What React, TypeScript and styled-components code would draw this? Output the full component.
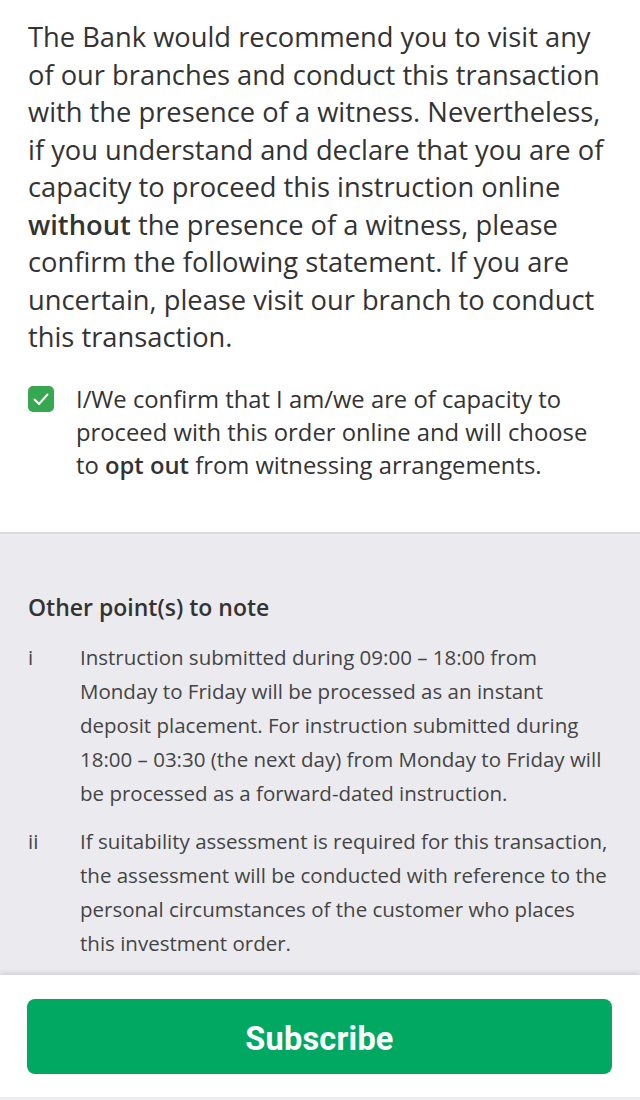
import React from "react";
import styled, { createGlobalStyle } from "styled-components";

const Global = createGlobalStyle`
  html, body { margin: 0; padding: 0; background: #ffffff; }
  body { font-family: "Open Sans", "Noto Sans", sans-serif; color: #333333; }
  * { box-sizing: border-box; }
`;

const Page = styled.div`
  height: 1100px;
  display: flex;
  flex-direction: column;
  overflow: hidden;
`;

const Main = styled.main`
  flex: 1;
  min-height: 0;
  overflow: hidden;
  display: flex;
  flex-direction: column;
`;

const Intro = styled.section`
  padding: 18px 30px 50px 28px;
  background: #ffffff;
`;

const Lead = styled.p`
  margin: 0;
  font-size: 27.3px;
  line-height: 37.5px;
  color: #333333;
`;

const Strong = styled.b`
  font-weight: 600;
`;

const ConfirmRow = styled.label`
  margin-top: 27px;
  display: flex;
  align-items: flex-start;
  gap: 22px;
`;

const CheckBox = styled.span`
  flex: none;
  width: 26px;
  height: 26px;
  margin-top: 3px;
  border-radius: 5px;
  background: #36a852;
  display: flex;
  align-items: center;
  justify-content: center;
`;

const ConfirmText = styled.span`
  font-size: 23.8px;
  line-height: 33px;
  color: #333333;
`;

const Notes = styled.section`
  flex: 1;
  background: #ebebef;
  border-top: 2px solid #dcdce0;
  padding: 58px 26px 0 28px;
`;

const NotesTitle = styled.h2`
  margin: 0 0 18px 0;
  font-size: 23px;
  line-height: 30px;
  font-weight: 600;
  color: #333333;
`;

const List = styled.ol`
  list-style: none;
  margin: 0;
  padding: 0;
  display: flex;
  flex-direction: column;
  gap: 14px;
`;

const Item = styled.li`
  display: flex;
  align-items: flex-start;
`;

const Marker = styled.span`
  flex: none;
  width: 52px;
  font-size: 20.5px;
  line-height: 34px;
  color: #444444;
`;

const ItemText = styled.span`
  font-size: 20.5px;
  line-height: 34px;
  color: #444444;
`;

const Footer = styled.footer`
  flex: none;
  position: relative;
  background: #ffffff;
  box-shadow: 0 -2px 5px rgba(0, 0, 0, 0.12);
  padding: 24px 28px 23px 27px;
  border-bottom: 3px solid #ececef;
`;

const Button = styled.button`
  width: 100%;
  height: 75px;
  border: none;
  border-radius: 8px;
  background: #00a862;
  color: #ffffff;
  font-family: Roboto, "Liberation Sans", sans-serif;
  font-weight: 700;
  font-size: 32.5px;
  letter-spacing: 0.2px;
  display: flex;
  align-items: center;
  justify-content: center;
  padding-top: 5px;
  cursor: pointer;
`;

export default function App() {
  return (
    <Page>
      <Global />
      <Main>
        <Intro>
          <Lead>
            The Bank would recommend you to visit any of our branches and
            conduct this transaction with the presence of a witness.
            Nevertheless, if you understand and declare that you are of
            capacity to proceed this instruction online{" "}
            <Strong>without</Strong> the presence of a witness, please confirm
            the following statement. If you are uncertain, please visit our
            branch to conduct this transaction.
          </Lead>
          <ConfirmRow>
            <CheckBox>
              <svg width="18" height="18" viewBox="0 0 18 18" fill="none">
                <path
                  d="M2.5 9.5 L7 14 L15.5 4.5"
                  stroke="#ffffff"
                  strokeWidth="2"
                  strokeLinecap="round"
                  strokeLinejoin="round"
                />
              </svg>
            </CheckBox>
            <ConfirmText>
              I/We confirm that I am/we are of capacity to proceed with this
              order online and will choose to <Strong>opt out</Strong> from
              witnessing arrangements.
            </ConfirmText>
          </ConfirmRow>
        </Intro>
        <Notes>
          <NotesTitle>Other point(s) to note</NotesTitle>
          <List>
            <Item>
              <Marker>i</Marker>
              <ItemText>
                Instruction submitted during 09:00 – 18:00 from Monday to
                Friday will be processed as an instant deposit placement. For
                instruction submitted during 18:00 – 03:30 (the next day) from
                Monday to Friday will be processed as a forward-dated
                instruction.
              </ItemText>
            </Item>
            <Item>
              <Marker>ii</Marker>
              <ItemText>
                If suitability assessment is required for this transaction, the
                assessment will be conducted with reference to the personal
                circumstances of the customer who places this investment order.
              </ItemText>
            </Item>
          </List>
        </Notes>
      </Main>
      <Footer>
        <Button>Subscribe</Button>
      </Footer>
    </Page>
  );
}
